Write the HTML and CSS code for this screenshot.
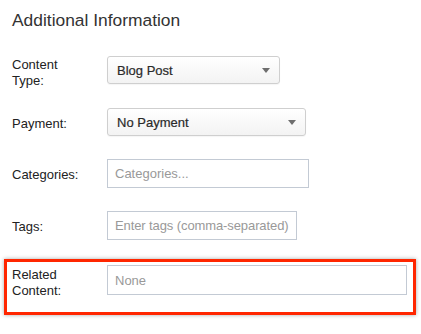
FILE: index.html
```html
<!DOCTYPE html>
<html>
<head>
<meta charset="utf-8">
<link rel="stylesheet" href="styles.css">
</head>
<body>
<div class="panel">
  <h2 class="title">Additional Information</h2>
  <div class="row row-type">
    <label class="label label-two">Content<br>Type:</label>
    <div class="select select-type"><span>Blog Post</span><i class="caret"></i></div>
  </div>
  <div class="row row-payment">
    <label class="label">Payment:</label>
    <div class="select select-payment"><span>No Payment</span><i class="caret"></i></div>
  </div>
  <div class="row row-cat">
    <label class="label">Categories:</label>
    <div class="input input-cat">Categories...</div>
  </div>
  <div class="row row-tags">
    <label class="label">Tags:</label>
    <div class="input input-tags">Enter tags (comma-separated)</div>
  </div>
  <div class="highlight">
    <div class="row row-related">
      <label class="label label-two label-related">Related<br>Content:</label>
      <div class="input input-related">None</div>
    </div>
  </div>
</div>
</body>
</html>
```
FILE: styles.css
```css
html, body {
  margin: 0;
  padding: 0;
  background: #fff;
}
body {
  font-family: "Liberation Sans", Arial, Helvetica, sans-serif;
  color: #222;
  width: 421px;
  height: 334px;
  overflow: hidden;
}
.panel {
  padding: 0 0 0 12px;
  display: flex;
  flex-direction: column;
}
.title {
  margin: 0;
  padding-top: 9px;
  font-size: 17.4px;
  line-height: 22px;
  font-weight: normal;
  color: #333;
}
.row {
  display: flex;
  align-items: flex-start;
}
.row-type { margin-top: 25px; }
.row-payment { margin-top: 19px; }
.row-cat { margin-top: 23px; }
.row-tags { margin-top: 23px; }
.label {
  width: 95px;
  flex: none;
  font-size: 13px;
  line-height: 16px;
  padding-top: 8px;
  color: #222;
}
.label-two { padding-top: 1px; }
.label-related { padding-top: 2px; }
.select {
  box-sizing: border-box;
  height: 28px;
  border: 1px solid #cfcfcf;
  border-radius: 3px;
  background: linear-gradient(#ffffff, #f3f3f3);
  display: flex;
  align-items: center;
  justify-content: space-between;
  padding: 0 9px 0 9px;
  font-size: 13px;
  color: #2a2a2a;
  box-shadow: 0 1px 1px rgba(0,0,0,0.04);
}
.select span { -webkit-text-stroke: 0.2px #2a2a2a; }
.select-type { width: 173px; }
.select-payment { width: 199px; }
.caret {
  width: 0;
  height: 0;
  border-left: 4.5px solid transparent;
  border-right: 4.5px solid transparent;
  border-top: 5px solid #6e6e6e;
  margin-top: 1px;
}
.input {
  box-sizing: border-box;
  height: 29px;
  border: 1px solid #c3cad4;
  background: #fff;
  font-size: 13px;
  color: #999;
  padding: 0 7px;
  display: flex;
  align-items: center;
  white-space: nowrap;
  overflow: hidden;
}
.input-cat { width: 202px; }
.input-tags { width: 190px; padding: 0 2px 0 7px; letter-spacing: -0.1px; }
.input-related { width: 300px; height: 30px; }
.highlight {
  margin: 19px 0 0 -8px;
  width: 412px;
  height: 56px;
  box-sizing: border-box;
  border: 3px solid #ff2600;
  padding: 3px 0 0 5px;
  box-shadow: 0 0 4px rgba(0,0,0,0.35);
}
```
